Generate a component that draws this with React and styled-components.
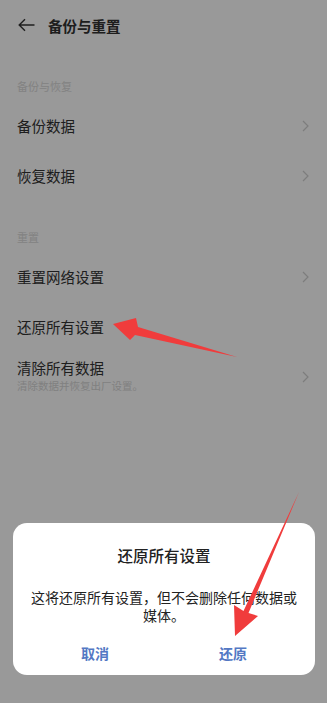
import React from 'react'
import styled, { createGlobalStyle } from 'styled-components'

const Global = createGlobalStyle`
  html, body {
    margin: 0;
    padding: 0;
    width: 327px;
    height: 703px;
    overflow: hidden;
    background: #fff;
  }
  * { box-sizing: border-box; }
  body {
    font-family: "Noto Sans CJK SC", "Noto Sans", sans-serif;
  }
`

const Screen = styled.div`
  position: relative;
  width: 327px;
  height: 703px;
  background: #ffffff;
  overflow: hidden;
`

const Header = styled.div`
  height: 50px;
  display: flex;
  align-items: center;
  padding-left: 18px;
  gap: 13px;
`

const Title = styled.div`
  font-size: 14.5px;
  font-weight: 700;
  color: #333;
`

const SectionLabel = styled.div`
  padding: 28px 17px 0;
  margin-bottom: 7px;
  height: 44px;
  line-height: 16px;
  font-size: 11px;
  color: #d9d9d9;
  display: flex;
  align-items: flex-end;
`

const Item = styled.div`
  height: 50px;
  display: flex;
  align-items: ${p => (p.$sub ? 'flex-start' : 'center')};
  padding: ${p => (p.$sub ? '6px 18px 0 17px' : '0 18px 0 17px')};
`

const ItemText = styled.div`
  flex: 1;
  display: flex;
  flex-direction: column;
`

const ItemTitle = styled.div`
  font-size: 14.5px;
  line-height: 20px;
  color: #333;
`

const ItemSub = styled.div`
  font-size: 10.5px;
  line-height: 16px;
  color: #d6d6d6;
`

const Chevron = styled.svg`
  width: 7px;
  height: 12px;
  align-self: center;
  margin-top: ${p => (p.$sub ? '-6px' : '0')};
`

const Dim = styled.div`
  position: absolute;
  inset: 0;
  background: rgba(0, 0, 0, 0.4);
`

const Dialog = styled.div`
  position: absolute;
  left: 13px;
  right: 12px;
  bottom: 28px;
  background: #fff;
  border-radius: 14px;
  padding-top: 21px;
  display: flex;
  flex-direction: column;
  align-items: center;
`

const DialogTitle = styled.div`
  font-size: 15.5px;
  line-height: 22px;
  font-weight: 500;
  color: #222;
  margin-bottom: 22px;
`

const DialogBody = styled.div`
  padding: 0 16px;
  font-size: 14px;
  line-height: 18px;
  color: #222;
  text-align: center;
  margin-bottom: 7px;
`

const Buttons = styled.div`
  width: 100%;
  display: flex;
  padding: 0 13px;
  height: 44px;
`

const Btn = styled.div`
  flex: 1;
  display: flex;
  align-items: center;
  justify-content: center;
  font-size: 14px;
  font-weight: 600;
  color: #5378c4;
`

const Annotations = styled.svg`
  position: absolute;
  inset: 0;
  pointer-events: none;
`

function Arrow({ sub }) {
  return (
    <Chevron $sub={sub} viewBox="0 0 7 12">
      <path d="M1 1l5 5-5 5" fill="none" stroke="#d0d0d0" strokeWidth="1.2" />
    </Chevron>
  )
}

export default function App() {
  return (
    <Screen>
      <Global />
      <Header>
        <svg width="17" height="14" viewBox="0 0 17 14">
          <path d="M16.5 7H1.2M7 1.2L1.2 7 7 12.8" fill="none" stroke="#333" strokeWidth="1.4" />
        </svg>
        <Title>备份与重置</Title>
      </Header>

      <SectionLabel>备份与恢复</SectionLabel>
      <Item>
        <ItemText><ItemTitle>备份数据</ItemTitle></ItemText>
        <Arrow />
      </Item>
      <Item>
        <ItemText><ItemTitle>恢复数据</ItemTitle></ItemText>
        <Arrow />
      </Item>

      <SectionLabel>重置</SectionLabel>
      <Item>
        <ItemText><ItemTitle>重置网络设置</ItemTitle></ItemText>
        <Arrow />
      </Item>
      <Item>
        <ItemText><ItemTitle>还原所有设置</ItemTitle></ItemText>
      </Item>
      <Item $sub>
        <ItemText>
          <ItemTitle>清除所有数据</ItemTitle>
          <ItemSub>清除数据并恢复出厂设置。</ItemSub>
        </ItemText>
        <Arrow sub />
      </Item>

      <Dim />

      <Dialog>
        <DialogTitle>还原所有设置</DialogTitle>
        <DialogBody>这将还原所有设置，但不会删除任何数据或媒体。</DialogBody>
        <Buttons>
          <Btn>取消</Btn>
          <Btn>还原</Btn>
        </Buttons>
      </Dialog>

      <Annotations width="327" height="703" viewBox="0 0 327 703">
        <polygon
          points="113,324 136,318 138,327 237,357 135,335 130,340"
          fill="#f03c3c"
        />
        <polygon
          points="235,636 234,605 243.5,611 299,492 248.5,613 258,616"
          fill="#f03c3c"
        />
      </Annotations>
    </Screen>
  )
}
